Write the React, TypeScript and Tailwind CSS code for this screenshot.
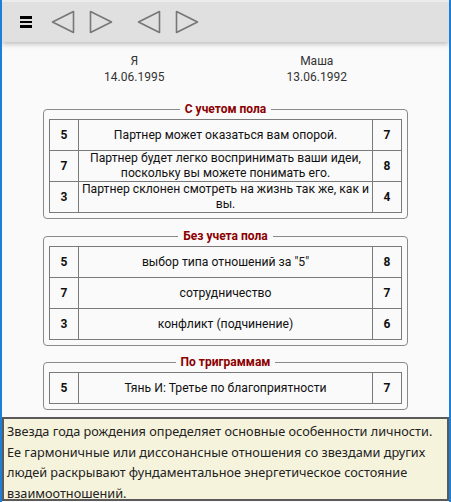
import React from "react";

type Row = { a: string; text: React.ReactNode; b: string };

const Tri = ({ dir }: { dir: "l" | "r" }) => (
  <svg width="24" height="24" viewBox="0 0 24 24" className="block">
    {dir === "l" ? (
      <path d="M22.5 1.5 L1.5 12 L22.5 22.5 Z" fill="none" stroke="#777" strokeWidth="1.6" strokeLinejoin="round" />
    ) : (
      <path d="M1.5 1.5 L22.5 12 L1.5 22.5 Z" fill="none" stroke="#777" strokeWidth="1.6" strokeLinejoin="round" />
    )}
  </svg>
);

const Group = ({ title, rows, className }: { title: string; rows: Row[]; className?: string }) => (
  <fieldset className={"mx-[41px] border border-[#8a8a8a] rounded-[4px] px-[5px] pb-[5px] " + (className || "")}>
    <legend className="mx-auto px-[5px] text-[12px] leading-[14px] font-bold text-[#8b0000]">{title}</legend>
    <table className="w-full border-collapse mt-[3px]">
      <tbody>
        {rows.map((r, i) => (
          <tr key={i} className="h-[31px]">
            <td className="w-[29px] border border-[#7a7a7a] text-center font-bold text-[12px]">{r.a}</td>
            <td className="border border-[#7a7a7a] text-center text-[12.2px] leading-[15px] px-0 whitespace-nowrap">{r.text}</td>
            <td className="w-[29px] border border-[#7a7a7a] text-center font-bold text-[12px]">{r.b}</td>
          </tr>
        ))}
      </tbody>
    </table>
  </fieldset>
);

export default function App() {
  return (
    <div className="w-[451px] h-[502px] overflow-hidden bg-[#fafafa] relative border-l-2 border-r-2 border-[#1e7fd6] text-[#111]" style={{ fontFamily: "Roboto, 'Liberation Sans', sans-serif" }}>
      <div className="h-[42px] bg-[#e0e0e0] border-t-2 border-[#ececec] flex items-center shadow-[0_2px_5px_rgba(0,0,0,0.25)] relative z-10">
        <div className="ml-[18px] mr-[19px] flex flex-col gap-[2px]">
          <div className="w-[12px] h-[2.5px] bg-black" />
          <div className="w-[12px] h-[2.5px] bg-black" />
          <div className="w-[12px] h-[2.5px] bg-black" />
        </div>
        <div className="flex gap-[14px]">
          <Tri dir="l" />
          <Tri dir="r" />
        </div>
        <div className="flex gap-[14px] ml-[24px]">
          <Tri dir="l" />
          <Tri dir="r" />
        </div>
      </div>

      <div className="mx-[41px] grid grid-cols-2 mt-[11px] text-[12px] leading-[16px] text-[#333] text-center">
        <div>
          <div>Я</div>
          <div>14.06.1995</div>
        </div>
        <div>
          <div>Маша</div>
          <div>13.06.1992</div>
        </div>
      </div>

      <Group
        className="mt-[17px]"
        title="С учетом пола"
        rows={[
          { a: "5", text: "Партнер может оказаться вам опорой.", b: "7" },
          { a: "7", text: <>Партнер будет легко воспринимать ваши идеи,<br />поскольку вы можете понимать его.</>, b: "8" },
          { a: "3", text: <>Партнер склонен смотреть на жизнь так же, как и<br />вы.</>, b: "4" },
        ]}
      />
      <Group
        className="mt-[10px]"
        title="Без учета пола"
        rows={[
          { a: "5", text: "выбор типа отношений за \"5\"", b: "8" },
          { a: "7", text: "сотрудничество", b: "7" },
          { a: "3", text: "конфликт (подчинение)", b: "6" },
        ]}
      />
      <Group
        className="mt-[9px]"
        title="По триграммам"
        rows={[{ a: "5", text: "Тянь И: Третье по благоприятности", b: "7" }]}
      />

      <div
        className="absolute left-0 right-0 top-[417px] bottom-[1px] bg-[#f6f3dc] border-2 border-[#5a5a5a] pl-[3px] pt-[2px] text-[12.7px] leading-[20.7px] text-[#222]"
        style={{ fontFamily: "'Noto Sans', 'Open Sans', sans-serif" }}
      >
        Звезда года рождения определяет основные особенности личности. Ее гармоничные или диссонансные отношения со звездами других людей раскрывают фундаментальное энергетическое состояние взаимоотношений.
      </div>
    </div>
  );
}
